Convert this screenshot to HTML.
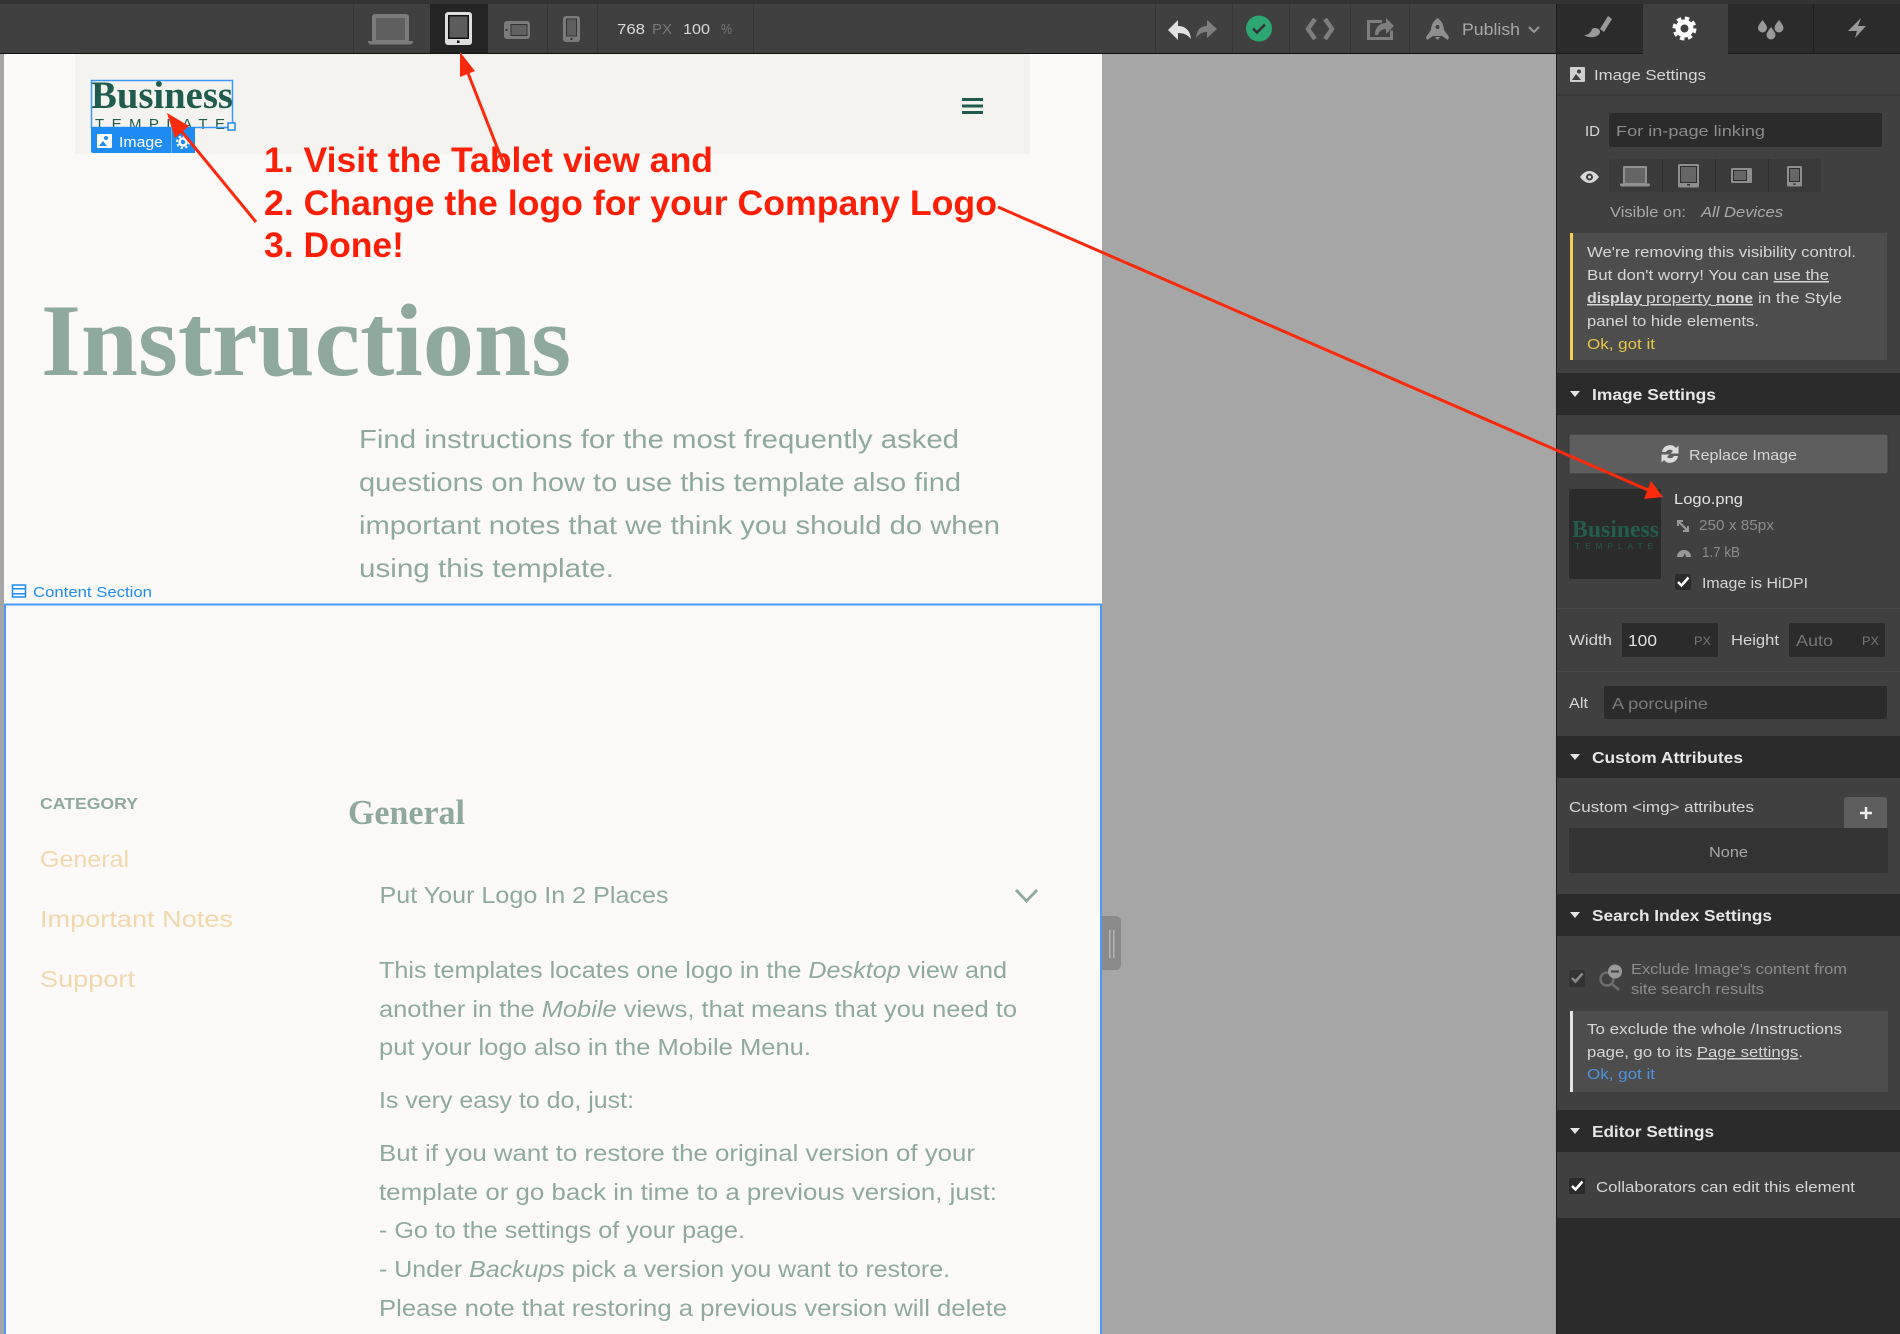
<!DOCTYPE html>
<html lang="en"><head><meta charset="utf-8"><title>Instructions</title>
<style>
html,body{margin:0;padding:0;background:#a6a6a6;width:1900px;height:1334px;overflow:hidden}
svg{display:block}
text{font-family:"Liberation Sans",sans-serif;white-space:pre}
.p{font-size:15px;fill:#d6d6d6}
.h{font-size:16px;font-weight:700;fill:#e6e6e6}
.d{font-size:15px;fill:#8c8c8c}
.b{font-size:23px;fill:#8fa99f}
.l{font-size:26px;fill:#8fa99f}
.g{font-size:23px;fill:#f2d8ad}
.r{font-size:35px;font-weight:700;fill:#fb1f08}
.s{font-family:"Liberation Serif",serif;font-weight:700}
.t{font-size:15px}
</style></head><body>
<svg width="1900" height="1334" viewBox="0 0 1900 1334" xmlns="http://www.w3.org/2000/svg">
<!-- backgrounds -->
<rect width="1900" height="1334" fill="#a6a6a6"/>
<rect x="4" y="54" width="1098" height="1280" fill="#fbfaf8"/>
<rect x="75" y="54" width="955" height="100" fill="#f4f3f0"/>
<!-- toolbar -->
<rect width="1900" height="53" fill="#404040"/>
<rect width="1900" height="4" fill="#333"/>
<rect y="53" width="1900" height="1" fill="#111"/>
<g fill="#363636">
<rect x="353" y="4" width="1" height="49"/><rect x="547" y="4" width="1" height="49"/><rect x="597" y="4" width="1" height="49"/><rect x="753" y="4" width="1" height="49"/>
<rect x="1155" y="4" width="1" height="49"/><rect x="1232" y="4" width="1" height="49"/><rect x="1289" y="4" width="1" height="49"/><rect x="1350" y="4" width="1" height="49"/><rect x="1409" y="4" width="1" height="49"/>
</g>
<rect x="430" y="4" width="58" height="49" fill="#242424"/>
<!-- laptop -->
<path d="M375 14h31a3 3 0 0 1 3 3v24h-37v-24a3 3 0 0 1 3-3z" fill="#7b7b7b"/><rect x="376" y="18" width="29" height="22" fill="#5f5f5f"/>
<path d="M368 41h45v.5a3 3 0 0 1-3 3h-39a3 3 0 0 1-3-3z" fill="#7b7b7b"/>
<!-- tablet -->
<rect x="445" y="12" width="27" height="33" rx="3" fill="#dedede"/><rect x="448" y="15" width="21" height="24" fill="#111"/><rect x="449.500" y="16.500" width="18" height="21" fill="#5c5c5c"/><rect x="457" y="40.500" width="2.500" height="2.500" fill="#111"/>
<!-- landscape -->
<rect x="504" y="21" width="26" height="18" rx="3" fill="#7b7b7b"/><rect x="510.500" y="24" width="17" height="12" fill="#333"/><rect x="511.500" y="25" width="15" height="10" fill="#5f5f5f"/><rect x="505.500" y="29" width="2" height="2" fill="#333"/>
<!-- phone -->
<rect x="563" y="16" width="17" height="26" rx="3" fill="#7b7b7b"/><rect x="566" y="18.500" width="11" height="18" fill="#333"/><rect x="567" y="19.500" width="9" height="16" fill="#5f5f5f"/><rect x="570.500" y="38" width="2" height="2" fill="#333"/>
<text x="617" y="34" font-size="15" fill="#d9d9d9" textLength="28" lengthAdjust="spacingAndGlyphs">768</text>
<text x="652" y="34" font-size="15" fill="#777" textLength="20" lengthAdjust="spacingAndGlyphs">PX</text>
<text x="683" y="34" font-size="15" fill="#d9d9d9" textLength="27" lengthAdjust="spacingAndGlyphs">100</text>
<text x="721" y="34" font-size="15" fill="#777" textLength="11" lengthAdjust="spacingAndGlyphs">%</text>
<!-- undo redo -->
<path d="M1168 30l10-10v6c7 0 12 4 13 13-3-4-7-6-13-6v7z" fill="#e2e2e2"/>
<path d="M1217 29l-10-9v6c-7 0-10 4-11 12 3-4 6-6 11-6v6z" fill="#7e7e7e"/>
<circle cx="1259" cy="28.500" r="13" fill="#2ea672"/><path d="M1253 28.500l4 4 8-8" fill="none" stroke="#333" stroke-width="2.600"/>
<path d="M1315 19l-7 10 7 10M1325 19l7 10-7 10" fill="none" stroke="#7e7e7e" stroke-width="4.500"/>
<path d="M1382 21.500h-13.500v17h23v-8" fill="none" stroke="#7e7e7e" stroke-width="3"/><path d="M1375 35c0-7 4-12 11-12v-5l8 8-8 8v-5c-4 0-7 2-8 6z" fill="#7e7e7e"/>
<path d="M1437.500 18C1442 21 1444 26 1444 30L1449 37 1448 40 1442 36H1433L1427 40 1426 37 1431 30C1431 26 1433 21 1437.500 18z" fill="#8e8e8e"/><circle cx="1437.500" cy="27" r="2" fill="#404040"/><path d="M1435 37h5l-2.500 3z" fill="#8e8e8e"/>
<text x="1462" y="35" font-size="17" fill="#a8a8a8" textLength="58" lengthAdjust="spacingAndGlyphs">Publish</text>
<path d="M1529 27l5 5 5-5" fill="none" stroke="#999" stroke-width="2"/>
<!-- logo -->
<text class="s" x="91" y="108" font-size="39" fill="#1f5c4d" textLength="142" lengthAdjust="spacingAndGlyphs">Business</text>
<text x="95" y="129" font-size="15" fill="#1f5c4d" textLength="130" lengthAdjust="spacing">TEMPLATE</text>
<rect x="91.500" y="80.500" width="141" height="47" fill="none" stroke="#3f97f5" stroke-width="1.500"/>
<path d="M91 127h104v26h-102a2 2 0 0 1-2-2z" fill="#1e8cf2"/><rect x="171" y="127" width="1" height="26" fill="#6db5f7"/>
<rect x="97" y="134" width="15" height="14" rx="1" fill="#fff"/><circle cx="106" cy="138" r="2" fill="#1e8cf2"/><path d="M99 146l4-5 4 5z" fill="#1e8cf2"/>
<text x="119" y="147" font-size="15" fill="#fff" textLength="44" lengthAdjust="spacingAndGlyphs">Image</text>
<circle cx="183" cy="142" r="3.500" fill="none" stroke="#fff" stroke-width="2.500"/><circle cx="183" cy="142" r="6" fill="none" stroke="#fff" stroke-width="2" stroke-dasharray="2.300 2.410"/>
<rect x="228" y="123" width="7" height="7" fill="#fff" stroke="#1e8cf2" stroke-width="1.500"/>
<!-- hamburger -->
<g fill="#1f5c4d"><rect x="962" y="98" width="21" height="3"/><rect x="962" y="104.500" width="21" height="3"/><rect x="962" y="111" width="21" height="3"/></g>
<!-- hero -->
<text class="s" x="41" y="375" font-size="103" fill="#8fa99f" textLength="530" lengthAdjust="spacingAndGlyphs">Instructions</text>
<text class="l" x="359" y="448" textLength="600" lengthAdjust="spacingAndGlyphs">Find instructions for the most frequently asked</text>
<text class="l" x="359" y="491" textLength="602" lengthAdjust="spacingAndGlyphs">questions on how to use this template also find</text>
<text class="l" x="359" y="534" textLength="641" lengthAdjust="spacingAndGlyphs">important notes that we think you should do when</text>
<text class="l" x="359" y="577" textLength="255" lengthAdjust="spacingAndGlyphs">using this template.</text>
<!-- selection -->
<path d="M5 1334V604.500H1101V1334" fill="none" stroke="#4d9bf5" stroke-width="2"/>
<rect x="12.500" y="585" width="13" height="12" fill="none" stroke="#1e8cf2" stroke-width="1.500"/><rect x="12" y="593" width="14" height="1.500" fill="#1e8cf2"/><rect x="12" y="588" width="14" height="1.500" fill="#1e8cf2"/>
<text x="33" y="597" font-size="15" fill="#1e8cf2" textLength="119" lengthAdjust="spacingAndGlyphs">Content Section</text>
<!-- sidebar -->
<text x="40" y="809" font-size="16" font-weight="700" fill="#8fa99f" textLength="98" lengthAdjust="spacingAndGlyphs">CATEGORY</text>
<text class="g" x="40" y="867" textLength="89" lengthAdjust="spacingAndGlyphs">General</text>
<text class="g" x="40" y="927" textLength="193" lengthAdjust="spacingAndGlyphs">Important Notes</text>
<text class="g" x="40" y="987" textLength="95" lengthAdjust="spacingAndGlyphs">Support</text>
<!-- content -->
<text class="s" x="348" y="824" font-size="35" fill="#8fa99f" textLength="117" lengthAdjust="spacingAndGlyphs">General</text>
<text class="b" x="379.500" y="903" textLength="289" lengthAdjust="spacingAndGlyphs">Put Your Logo In 2 Places</text>
<path d="M1016 890l10.500 11 10.500-11" fill="none" stroke="#8fa99f" stroke-width="2.800"/>
<text class="b" x="379" y="978" textLength="628" lengthAdjust="spacingAndGlyphs">This templates locates one logo in the <tspan font-style="italic">Desktop</tspan> view and</text>
<text class="b" x="379" y="1017" textLength="638" lengthAdjust="spacingAndGlyphs">another in the <tspan font-style="italic">Mobile</tspan> views, that means that you need to</text>
<text class="b" x="379" y="1055" textLength="432" lengthAdjust="spacingAndGlyphs">put your logo also in the Mobile Menu.</text>
<text class="b" x="379" y="1108" textLength="255" lengthAdjust="spacingAndGlyphs">Is very easy to do, just:</text>
<text class="b" x="379" y="1161" textLength="596" lengthAdjust="spacingAndGlyphs">But if you want to restore the original version of your</text>
<text class="b" x="379" y="1200" textLength="618" lengthAdjust="spacingAndGlyphs">template or go back in time to a previous version, just:</text>
<text class="b" x="379" y="1238" textLength="366" lengthAdjust="spacingAndGlyphs">- Go to the settings of your page.</text>
<text class="b" x="379" y="1277" textLength="571" lengthAdjust="spacingAndGlyphs">- Under <tspan font-style="italic">Backups</tspan> pick a version you want to restore.</text>
<text class="b" x="379" y="1316" textLength="628" lengthAdjust="spacingAndGlyphs">Please note that restoring a previous version will delete</text>
<!-- handle -->
<path d="M1102 916h14a5 5 0 0 1 5 5v44a5 5 0 0 1-5 5h-14z" fill="#8a8a8a"/>
<rect x="1109" y="930" width="1.500" height="28" fill="#b5b5b5"/><rect x="1113" y="930" width="1.500" height="28" fill="#b5b5b5"/>
<!-- panel -->
<rect x="1556" y="4" width="344" height="1330" fill="#404040"/>
<rect x="1556" y="4" width="1" height="1330" fill="#1c1c1c"/>
<rect x="1557" y="4" width="86" height="49" fill="#2b2b2b"/><rect x="1728" y="4" width="172" height="49" fill="#2b2b2b"/>
<rect x="1813" y="4" width="1" height="49" fill="#1f1f1f"/>
<rect x="1557" y="53" width="86" height="1" fill="#1c1c1c"/><rect x="1728" y="53" width="172" height="1" fill="#1c1c1c"/>
<!-- tab icons -->
<path d="M1600 29l8-13 4 3-8 13z" fill="#999"/><path d="M1584 35c5 0 7-3 8-6 2-2 7-1 8 2 1 5-9 9-16 4z" fill="#999"/>
<circle cx="1684.500" cy="28.500" r="6.500" fill="none" stroke="#fff" stroke-width="5"/><circle cx="1684.500" cy="28.500" r="10.500" fill="none" stroke="#fff" stroke-width="3" stroke-dasharray="4.500 3.750"/>
<path d="M1762.500 20c2.500 3.500 4.500 5.500 4.500 8a4.500 4.500 0 0 1-9 0c0-2.500 2-4.500 4.500-8zM1779 20c2.500 3.500 4.500 5.500 4.500 8a4.500 4.500 0 0 1-9 0c0-2.500 2-4.500 4.500-8zM1771 27c2.500 3.500 4.500 5.500 4.500 8a4.500 4.500 0 0 1-9 0c0-2.500 2-4.500 4.500-8z" fill="#999"/>
<path d="M1861 18L1848 31H1857L1855 38 1866 26H1858z" fill="#999"/>
<!-- image settings top -->
<rect x="1570" y="67" width="15" height="15" rx="1" fill="#d0d0d0"/><circle cx="1579" cy="71.500" r="2" fill="#404040"/><path d="M1572 80l4-6 5 6z" fill="#404040"/>
<text class="p" x="1594" y="80" textLength="112" lengthAdjust="spacingAndGlyphs">Image Settings</text>
<rect x="1557" y="94" width="343" height="2" fill="#383838"/>
<text class="p" x="1585" y="136" textLength="15" lengthAdjust="spacingAndGlyphs">ID</text>
<rect x="1609" y="113" width="273" height="34" rx="2" fill="#2b2b2b"/>
<text class="d" x="1616" y="136" font-size="16" textLength="149" lengthAdjust="spacingAndGlyphs">For in-page linking</text>
<path d="M1580 177c3-4 6-6 9.500-6s6.500 2 9.500 6c-3 4-6 6-9.500 6s-6.500-2-9.500-6z" fill="#d8d8d8"/><circle cx="1589.500" cy="177" r="3.500" fill="#404040"/><circle cx="1589.500" cy="177" r="1.500" fill="#d8d8d8"/>
<rect x="1609" y="159" width="212" height="33" fill="#3a3a3a"/>
<g fill="#2e2e2e"><rect x="1662" y="159" width="1" height="33"/><rect x="1715" y="159" width="1" height="33"/><rect x="1768" y="159" width="1" height="33"/></g>
<!-- panel devices -->
<rect x="1623" y="166" width="24" height="18" rx="1" fill="#909090"/><rect x="1625" y="168" width="20" height="15" fill="#656565"/><path d="M1620 183.500h30v1a2 2 0 0 1-2 2h-26a2 2 0 0 1-2-2z" fill="#909090"/>
<rect x="1678" y="164" width="21" height="23.500" rx="1.500" fill="#8e8e8e"/><rect x="1680" y="166" width="17" height="17" fill="#2e2e2e"/><rect x="1681" y="167" width="15" height="15" fill="#666"/><rect x="1687" y="184" width="3" height="1.500" fill="#333"/>
<rect x="1731" y="168" width="21" height="15" rx="1.500" fill="#8e8e8e"/><rect x="1733" y="170" width="14" height="11" fill="#2e2e2e"/><rect x="1734" y="171" width="12" height="9" fill="#666"/>
<rect x="1787" y="166" width="15" height="20.500" rx="1.500" fill="#8e8e8e"/><rect x="1789" y="168" width="11" height="14" fill="#2e2e2e"/><rect x="1790" y="169" width="9" height="12" fill="#666"/><rect x="1793" y="183.500" width="3" height="1.200" fill="#333"/>
<text class="p" x="1610" y="217" style="fill:#aaa" textLength="76" lengthAdjust="spacingAndGlyphs">Visible on:</text>
<text class="p" x="1701" y="217" font-style="italic" style="fill:#aaa" textLength="82" lengthAdjust="spacingAndGlyphs">All Devices</text>
<rect x="1570" y="233" width="317" height="127" fill="#4d4d4d"/><rect x="1570" y="233" width="3" height="127" fill="#f2cf55"/>
<text class="p t" x="1587" y="257" textLength="269" lengthAdjust="spacingAndGlyphs">We're removing this visibility control.</text>
<text class="p t" x="1587" y="280" textLength="242" lengthAdjust="spacingAndGlyphs">But don't worry! You can <tspan text-decoration="underline">use the</tspan></text>
<text class="p t" x="1587" y="303" text-decoration="underline" font-weight="700" textLength="55" lengthAdjust="spacingAndGlyphs">display</text>
<rect x="1642" y="305" width="5" height="1" fill="#d6d6d6"/><rect x="1711" y="305" width="5" height="1" fill="#d6d6d6"/>
<text class="p t" x="1646" y="303" text-decoration="underline" textLength="65" lengthAdjust="spacingAndGlyphs">property</text>
<text class="p t" x="1716" y="303" text-decoration="underline" font-weight="700" textLength="37" lengthAdjust="spacingAndGlyphs">none</text>
<text class="p t" x="1758" y="303" textLength="84" lengthAdjust="spacingAndGlyphs">in the Style</text>
<text class="p t" x="1587" y="326" textLength="172" lengthAdjust="spacingAndGlyphs">panel to hide elements.</text>
<text class="t" x="1587" y="349" fill="#e9c646" textLength="68" lengthAdjust="spacingAndGlyphs">Ok, got it</text>
<!-- section: image settings -->
<rect x="1557" y="373" width="343" height="42" fill="#2b2b2b"/>
<path d="M1570 391h10l-5 6z" fill="#e6e6e6"/>
<text class="h" x="1592" y="400" textLength="124" lengthAdjust="spacingAndGlyphs">Image Settings</text>
<rect x="1569" y="434" width="319" height="40" rx="2" fill="#5e5e5e" stroke="#383838" stroke-width="1"/>
<path d="M1662 452a8 8 0 0 1 14-4l2.500-2.500v8h-8l2.500-2.500a4.500 4.500 0 0 0-7 1zM1678 456a8 8 0 0 1-14 4l-2.500 2.500v-8h8l-2.500 2.500a4.500 4.500 0 0 0 7-1z" fill="#dcdcdc"/>
<text class="p" x="1689" y="460" textLength="108" lengthAdjust="spacingAndGlyphs">Replace Image</text>
<rect x="1569" y="489" width="92" height="90" rx="2" fill="#2b2b2b"/>
<text class="s" x="1572" y="537" font-size="24" fill="#235c4c" textLength="87" lengthAdjust="spacingAndGlyphs">Business</text>
<text x="1575" y="549" font-size="8" fill="#235c4c" textLength="78" lengthAdjust="spacing">TEMPLATE</text>
<text class="p" x="1674" y="504" style="fill:#e3e3e3" textLength="69" lengthAdjust="spacingAndGlyphs">Logo.png</text>
<path d="M1677 520h6v2h-2.500l6.500 6.500v-2.500h2v6h-6v-2h2.500l-6.500-6.500v2.500h-2z" fill="#999"/>
<text class="d" x="1699" y="530" textLength="75" lengthAdjust="spacingAndGlyphs">250 x 85px</text>
<path d="M1677 557a7 7 0 0 1 14 0h-5l-1-4-2 4z" fill="#999"/>
<text class="d" x="1702" y="557" textLength="38" lengthAdjust="spacingAndGlyphs">1.7 kB</text>
<rect x="1675" y="574" width="16" height="16" rx="2" fill="#2b2b2b"/><path d="M1678 582l3.500 3.500 7-8" fill="none" stroke="#fff" stroke-width="2.500"/>
<text class="p" x="1702" y="588" textLength="106" lengthAdjust="spacingAndGlyphs">Image is HiDPI</text>
<rect x="1557" y="608" width="343" height="1" fill="#4a4a4a"/>
<!-- width -->
<text class="p" x="1569" y="645" textLength="43" lengthAdjust="spacingAndGlyphs">Width</text>
<rect x="1622" y="623" width="96" height="34" rx="2" fill="#2b2b2b"/>
<text class="p" x="1628" y="646" style="fill:#e3e3e3;font-size:16px" textLength="29" lengthAdjust="spacingAndGlyphs">100</text>
<text x="1694" y="645" font-size="12" fill="#777" textLength="17" lengthAdjust="spacingAndGlyphs">PX</text>
<text class="p" x="1731" y="645" textLength="48" lengthAdjust="spacingAndGlyphs">Height</text>
<rect x="1789" y="623" width="96" height="34" rx="2" fill="#2b2b2b"/>
<text x="1796" y="646" font-size="16" fill="#777" textLength="37" lengthAdjust="spacingAndGlyphs">Auto</text>
<text x="1862" y="645" font-size="12" fill="#777" textLength="17" lengthAdjust="spacingAndGlyphs">PX</text>
<rect x="1557" y="671" width="343" height="1" fill="#4a4a4a"/>
<text class="p" x="1569" y="708" textLength="19" lengthAdjust="spacingAndGlyphs">Alt</text>
<rect x="1604" y="686" width="283" height="33" rx="2" fill="#2b2b2b"/>
<text x="1612" y="709" font-size="16" fill="#7c7c7c" textLength="96" lengthAdjust="spacingAndGlyphs">A porcupine</text>
<!-- custom attributes -->
<rect x="1557" y="736" width="343" height="42" fill="#2b2b2b"/>
<path d="M1570 754h10l-5 6z" fill="#e6e6e6"/>
<text class="h" x="1592" y="763" textLength="151" lengthAdjust="spacingAndGlyphs">Custom Attributes</text>
<text class="p" x="1569" y="812" textLength="185" lengthAdjust="spacingAndGlyphs">Custom &lt;img&gt; attributes</text>
<path d="M1844 828v-28a3 3 0 0 1 3-3h37a3 3 0 0 1 3 3v28z" fill="#5e5e5e"/>
<path d="M1860 813h12M1866 807v12" stroke="#eee" stroke-width="2.500" fill="none"/>
<rect x="1569" y="828" width="319" height="45" rx="1" fill="#333"/>
<text x="1709" y="857" font-size="15" fill="#a8a8a8" textLength="39" lengthAdjust="spacingAndGlyphs">None</text>
<!-- search index -->
<rect x="1557" y="894" width="343" height="42" fill="#2b2b2b"/>
<path d="M1570 912h10l-5 6z" fill="#e6e6e6"/>
<text class="h" x="1592" y="921" textLength="180" lengthAdjust="spacingAndGlyphs">Search Index Settings</text>
<rect x="1569" y="970" width="16" height="17" rx="2" fill="#333"/><path d="M1572 978l3.500 3.500 7-8" fill="none" stroke="#8a8a8a" stroke-width="2.500"/>
<circle cx="1607" cy="979" r="6.500" fill="none" stroke="#6c6c6c" stroke-width="2.500"/><path d="M1612 984l7 6" stroke="#6c6c6c" stroke-width="2.500"/>
<circle cx="1615" cy="971.500" r="7" fill="#999"/><rect x="1611" y="970.500" width="8" height="2" fill="#404040"/>
<text class="d" x="1631" y="974" textLength="216" lengthAdjust="spacingAndGlyphs">Exclude Image's content from</text>
<text class="d" x="1631" y="994" textLength="133" lengthAdjust="spacingAndGlyphs">site search results</text>
<rect x="1570" y="1011" width="318" height="81" fill="#4d4d4d"/><rect x="1570" y="1011" width="3" height="81" fill="#e3e3e3"/>
<text class="p t" x="1587" y="1034" textLength="255" lengthAdjust="spacingAndGlyphs">To exclude the whole /Instructions</text>
<text class="p t" x="1587" y="1057" textLength="216" lengthAdjust="spacingAndGlyphs">page, go to its <tspan text-decoration="underline">Page settings</tspan>.</text>
<text class="t" x="1587" y="1079" fill="#4f94e0" textLength="68" lengthAdjust="spacingAndGlyphs">Ok, got it</text>
<!-- editor settings -->
<rect x="1557" y="1110" width="343" height="42" fill="#2b2b2b"/>
<path d="M1570 1128h10l-5 6z" fill="#e6e6e6"/>
<text class="h" x="1592" y="1137" textLength="122" lengthAdjust="spacingAndGlyphs">Editor Settings</text>
<rect x="1569" y="1178" width="16" height="16" rx="2" fill="#2b2b2b"/><path d="M1572 1186l3.500 3.500 7-8" fill="none" stroke="#fff" stroke-width="2.500"/>
<text class="p" x="1596" y="1192" textLength="259" lengthAdjust="spacingAndGlyphs">Collaborators can edit this element</text>
<rect x="1557" y="1218" width="343" height="116" fill="#2b2b2b"/>
<!-- annotations -->
<text class="r" x="264" y="172" textLength="449" lengthAdjust="spacingAndGlyphs">1. Visit the Tablet view and</text>
<text class="r" x="264" y="215" textLength="733" lengthAdjust="spacingAndGlyphs">2. Change the logo for your Company Logo</text>
<text class="r" x="264" y="257" textLength="140" lengthAdjust="spacingAndGlyphs">3. Done!</text>
<g stroke="#fb2a0c" stroke-width="3" fill="none">
<path d="M256 222L178 127"/><path d="M506 170L466 68"/><path d="M998 207L1648 490"/>
</g>
<g fill="#fb2a0c">
<polygon points="167,113 189,126 175,138"/>
<polygon points="460,52 475,71 460,77"/>
<polygon points="1663,497 1644,499 1651,481"/>
</g>
</svg>
</body></html>
